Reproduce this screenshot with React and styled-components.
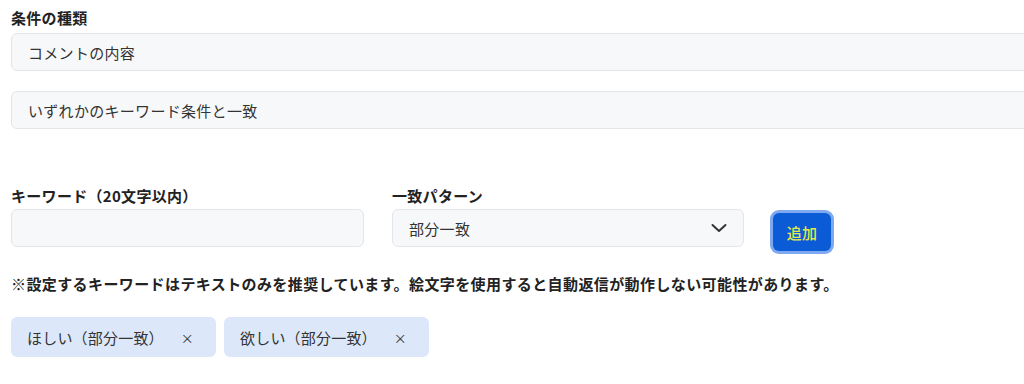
import React from "react";
import styled, { createGlobalStyle } from "styled-components";

const GlobalStyle = createGlobalStyle`
  body {
    margin: 0;
    background: #ffffff;
    overflow: hidden;
    font-family: "Noto Sans CJK JP", "Noto Sans", sans-serif;
    color: #333333;
  }
`;

const Page = styled.div`
  padding: 7px 0 0 11px;
  width: 1100px;
`;

const Label = styled.div`
  font-size: 15px;
  font-weight: 700;
  line-height: 22px;
  letter-spacing: 0.3px;
  color: #222222;
  margin-bottom: ${props => props.gap || 2}px;
`;

const Field = styled.div`
  box-sizing: border-box;
  display: flex;
  align-items: center;
  justify-content: space-between;
  height: ${props => props.h || 38}px;
  width: ${props => (props.w ? `${props.w}px` : "100%")};
  padding: 0 16px;
  background: #f7f8fa;
  border: 1px solid #e3e5e9;
  border-radius: 6px;
  font-size: 15px;
  letter-spacing: 0.3px;
  color: #333333;
  margin-bottom: ${props => props.mb || 0}px;
`;

const Row = styled.div`
  display: flex;
  align-items: flex-start;
  gap: 28px;
  margin-top: 56px;
`;

const Column = styled.div`
  display: flex;
  flex-direction: column;
`;

const AddButton = styled.button`
  box-sizing: border-box;
  width: 58px;
  height: 38px;
  margin: 28px 0 0 1px;
  border: none;
  border-radius: 6px;
  background: #0b5ad6;
  box-shadow: 0 0 0 3px #7ea8f0;
  color: #e4e84e;
  font-family: inherit;
  font-size: 15px;
  font-weight: 500;
  letter-spacing: 0.3px;
  cursor: pointer;
`;

const Note = styled.div`
  margin-top: 22px;
  font-size: 15px;
  font-weight: 700;
  line-height: 22px;
  letter-spacing: 0.4px;
  color: #222222;
`;

const Tags = styled.div`
  display: flex;
  gap: 8px;
  margin-top: 22px;
`;

const Tag = styled.div`
  box-sizing: border-box;
  display: flex;
  align-items: center;
  height: 40px;
  padding: 0 22px 0 16px;
  background: #dce8fa;
  border-radius: 6px;
  font-size: 15px;
  letter-spacing: 0.2px;
  color: #333333;
`;

const Remove = styled.span`
  margin-left: 17px;
  font-size: 13px;
  color: #333333;
`;

const Chevron = () => (
  <svg width="16" height="10" viewBox="0 0 16 10" fill="none">
    <polyline
      points="1.5,2 8,8 14.5,2"
      stroke="#333333"
      strokeWidth="2"
      strokeLinecap="round"
      strokeLinejoin="round"
    />
  </svg>
);

const tags = ["ほしい（部分一致）", "欲しい（部分一致）"];

const App = () => {
  return (
    <Page>
      <GlobalStyle />
      <Label gap={4}>条件の種類</Label>
      <Field mb={20}>コメントの内容</Field>
      <Field>いずれかのキーワード条件と一致</Field>
      <Row>
        <Column>
          <Label>キーワード（20文字以内）</Label>
          <Field w={353} />
        </Column>
        <Column>
          <Label>一致パターン</Label>
          <Field w={352}>
            部分一致
            <Chevron />
          </Field>
        </Column>
        <AddButton>追加</AddButton>
      </Row>
      <Note>
        ※設定するキーワードはテキストのみを推奨しています。絵文字を使用すると自動返信が動作しない可能性があります。
      </Note>
      <Tags>
        {tags.map(t => (
          <Tag key={t}>
            {t}
            <Remove>×</Remove>
          </Tag>
        ))}
      </Tags>
    </Page>
  );
};

export default App;
